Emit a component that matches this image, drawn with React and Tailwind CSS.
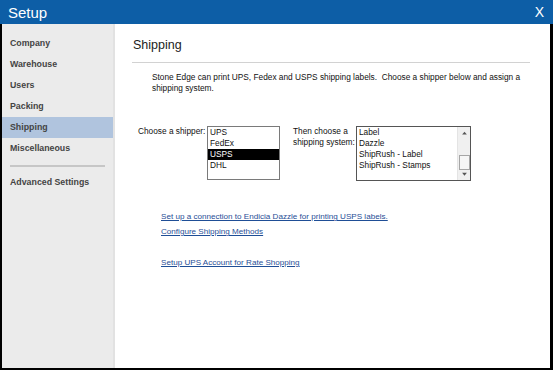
import React from "react";

const navItems = ["Company", "Warehouse", "Users", "Packing", "Shipping", "Miscellaneous"];
const shippers = ["UPS", "FedEx", "USPS", "DHL"];
const systems = ["Label", "Dazzle", "ShipRush - Label", "ShipRush - Stamps"];

// setup dialog, shipping page
const App = () => {
  const active = "Shipping";
  const selectedShipper = "USPS";

  return (
    <div className="w-[553px] h-[370px] bg-black flex flex-col font-['Liberation_Sans',Arial,sans-serif] overflow-hidden">
      <div className="h-[24px] bg-[#0d5ea6] flex items-center justify-between pl-[8px] pr-[9px] text-white">
        <span className="text-[15px] leading-none">Setup</span>
        <span className="text-[14px] leading-none">X</span>
      </div>

      <div className="flex-1 flex pl-[2px] pr-[3px] pb-[2px]">
        {/* sidebar */}
        <div className="w-[113px] bg-[#ebebeb] border-r-2 border-[#e2e2e2] pt-[9px] flex flex-col">
          {navItems.map((item) => (
            <div
              key={item}
              className={`h-[21px] flex items-center pl-[8px] text-[8.8px] font-bold text-[#444] ${item === active ? "bg-[#b0c4de]" : ""}`}
            >
              {item}
            </div>
          ))}
          <div className="mt-[6px] mx-[8px] h-[2px] bg-[#c6c6c6]" />
          <div className="mt-[5px] h-[21px] flex items-center pl-[8px] text-[8.8px] font-bold text-[#444]">
            Advanced Settings
          </div>
        </div>

        {/* main */}
        <div className="flex-1 bg-white pl-[18px] pr-[20px] pt-[13px] text-[#111]">
          <h2 className="text-[12.5px] leading-[16px] text-[#222]">Shipping</h2>
          <div className="mt-[9px] -ml-[1px] h-px bg-[#d2d2d2]" />

          <p className="mt-[9px] ml-[19px] w-[372px] text-[8.3px] leading-[11px]">
            Stone Edge can print UPS, Fedex and USPS shipping labels.&nbsp; Choose a shipper below and assign a
            shipping system.
          </p>

          <div className="mt-[32px] ml-[5px] flex items-start text-[8.3px]">
            <div className="w-[69px] leading-[11px]">Choose a shipper:</div>
            <div className="w-[73px] h-[54px] border border-[#7a7a7a] bg-white">
              {shippers.map((s) => (
                <div
                  key={s}
                  className={`h-[11px] leading-[11px] pl-[2px] ${s === selectedShipper ? "bg-black text-white" : ""}`}
                >
                  {s}
                </div>
              ))}
            </div>

            <div className="ml-[13px] w-[63px] leading-[11px] whitespace-nowrap">
              Then choose a
              <br />
              shipping system:
            </div>
            <div className="w-[115px] h-[55px] border border-[#555] bg-white flex">
              <div className="flex-1">
                {systems.map((s) => (
                  <div key={s} className="h-[11px] leading-[11px] pl-[2px]">
                    {s}
                  </div>
                ))}
              </div>
              <div className="w-[13px] bg-[#f0f0f0] border-l border-[#e4e4e4] flex flex-col items-center">
                <svg width="7" height="12" viewBox="0 0 7 12" className="mt-[1px]">
                  <path d="M1 7 L3.5 4 L6 7 Z" fill="#555" />
                </svg>
                <div className="mt-[16px] w-[11px] h-[15px] bg-[#f6f6f6] border border-[#a6a6a6]" />
                <div className="flex-1" />
                <svg width="7" height="10" viewBox="0 0 7 10" className="mb-[1px]">
                  <path d="M1 3 L3.5 6 L6 3 Z" fill="#555" />
                </svg>
              </div>
            </div>
          </div>

          <div className="mt-[30px] ml-[28px] flex flex-col text-[8.1px] leading-[11px] text-[#1f4e96]">
            <a className="underline">Set up a connection to Endicia Dazzle for printing USPS labels.</a>
            <a className="underline mt-[4px]">Configure Shipping Methods</a>
            <a className="underline mt-[20px]">Setup UPS Account for Rate Shopping</a>
          </div>
        </div>
      </div>
    </div>
  );
};

export default App;
